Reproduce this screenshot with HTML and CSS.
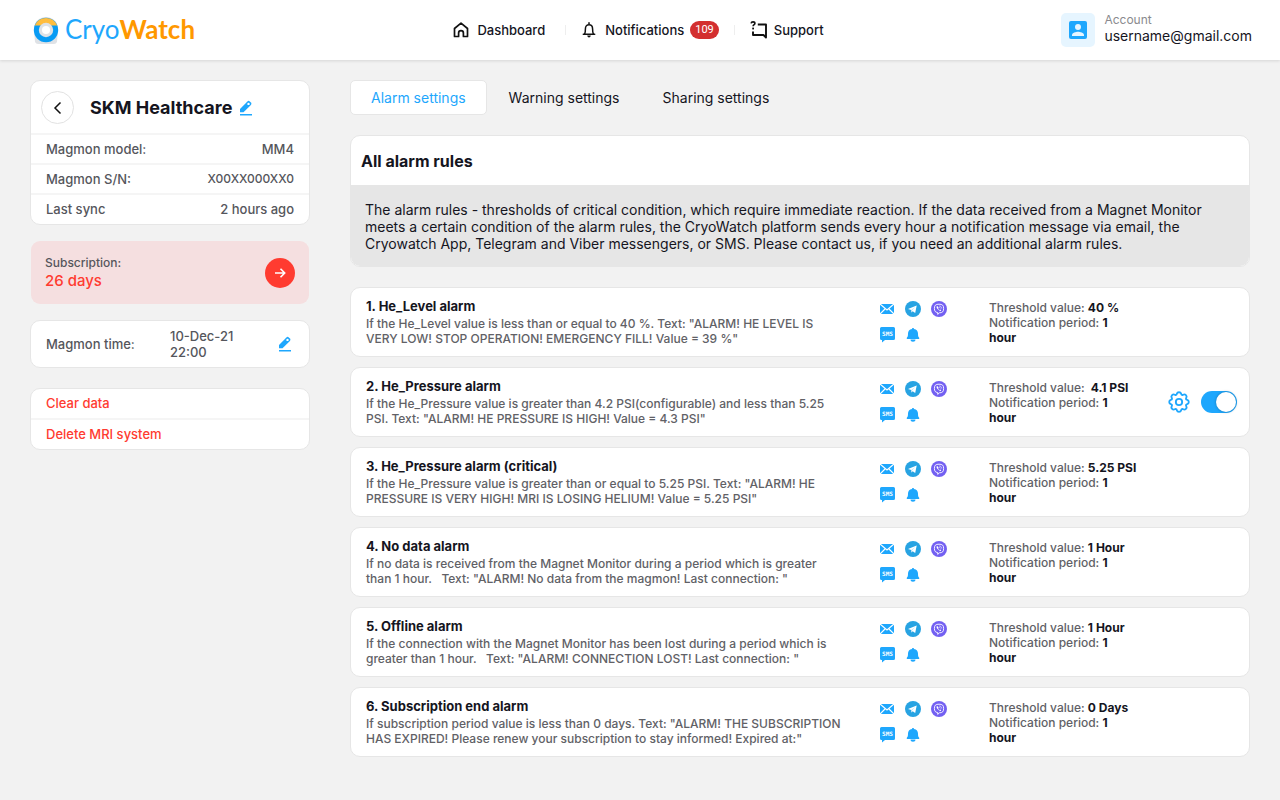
FILE: index.html
```html
<!DOCTYPE html>
<html lang="en">
<head>
<meta charset="utf-8">
<meta name="viewport" content="width=device-width, initial-scale=1">
<title>CryoWatch</title>
<link rel="stylesheet" href="styles.css">
</head>
<body>
<svg class="sprite" aria-hidden="true">
  <symbol id="mail" viewBox="0 0 16 16">
    <rect x="1" y="3" width="14" height="10" fill="#1ea7fd"/>
    <path d="M1 3l7 6 7-6M1 13l5-5M15 13l-5-5" fill="none" stroke="#fff" stroke-width="1.1"/>
  </symbol>
  <symbol id="telegram" viewBox="0 0 16 16">
    <circle cx="8" cy="8" r="8" fill="#27a3e2"/>
    <path d="M3 7.9l8.7-3.5-1.5 7.6-2.5-1.8-1.3 1.2-.2-2.3z" fill="#fff"/>
    <path d="M6.2 9.1l4-3.1-3.2 3.6-.6 1.8z" fill="#b5dcf3"/>
  </symbol>
  <symbol id="viber" viewBox="0 0 16 16">
    <circle cx="8" cy="8" r="8" fill="#7360f2"/>
    <path d="M8 3.2c3.4 0 4.6 1 4.6 4.3s-1.200 4.300-4.200 4.300L6.700 13.400v-1.800C4.300 11.200 3.400 10.100 3.400 7.500 3.400 4.200 4.600 3.200 8 3.200z" fill="none" stroke="#fff" stroke-width=".9"/>
    <path d="M5.900 5.300c-.7.5-.3 1.600.7 2.800s2.300 2.100 3 1.900c.8-.5.7-.9-.3-1.500l-.7.500c-.7-.3-1.200-.9-1.400-1.600l.4-.7c-.5-1-.9-1.700-1.700-1.400z" fill="#fff"/>
    <path d="M8.200 5c1.500 0 2.400.8 2.500 2.500M8.300 6.300c.7 0 1 .4 1.100 1.100" fill="none" stroke="#fff" stroke-width=".6"/>
  </symbol>
  <symbol id="sms" viewBox="0 0 16 16">
    <path d="M2.500 0h12A1.500 1.500 0 0 1 16 1.500v10a1.500 1.500 0 0 1-1.500 1.500H6l-3 2.500V13h-.5A1.500 1.500 0 0 1 1 11.500v-10A1.500 1.500 0 0 1 2.500 0z" fill="#1ea7fd"/>
    <text x="8.500" y="9" text-anchor="middle" class="sms-text">SMS</text>
  </symbol>
  <symbol id="bell-solid" viewBox="0 0 16 16">
    <path d="M8 1c.6 0 1 .4 1 1 2.700.5 4 2.200 4 4.600 0 2.400.2 3.400 1.200 4.200v1.200H1.800v-1.200c1-.8 1.200-1.800 1.200-4.200C3 4.200 4.300 2.500 7 2c0-.6.4-1 1-1zM5.500 12.600h5c0 1.400-1 2.200-2.500 2.200s-2.500-.8-2.500-2.200z" fill="#1ea7fd"/>
  </symbol>
  <symbol id="pencil" viewBox="0 0 16 16">
    <path d="M2 12.200V8.900L9.400 1.400a1.700 1.700 0 0 1 2.400 0l1.100 1.100a1.700 1.700 0 0 1 0 2.400L5.500 12.200z" fill="#1ea7fd"/>
    <circle cx="10.500" cy="3.900" r="1.200" fill="#fff"/>
    <rect x="2" y="14" width="12" height="1.500" fill="#1ea7fd"/>
  </symbol>
</svg>

<header class="topbar">
  <a class="logo" href="#" aria-label="CryoWatch">
    <svg class="logo-mark" viewBox="0 0 28 28" aria-hidden="true">
      <path d="M3 26l-1-12C2 6 7 1 14 1s12 5 12 13l-1 12q-1 2-3 2H6q-2 0-3-2z" fill="#dfe2e6"/>
      <circle cx="14" cy="14" r="12.200" fill="#089bf4"/>
      <path d="M2.700 9.500a12.200 12.200 0 0 1 22.600 0z" fill="#ffbd3e"/>
      <circle cx="14" cy="14" r="7.200" fill="#dfe2e6"/>
      <circle cx="14" cy="14" r="4" fill="#fff"/>
    </svg>
    <span class="logo-text">Cryo<b>Watch</b></span>
  </a>
  <nav class="menu">
    <a href="#" class="menu-item">
      <svg class="menu-icon" viewBox="0 0 16 16" aria-hidden="true"><path d="M1.500 6.500L8 1.200l6.500 5.300v8H10.400V11a2.400 2.400 0 0 0-4.800 0v3.500H1.500z" fill="none" stroke="#111" stroke-width="1.700" stroke-linejoin="round"/></svg>
      Dashboard
    </a>
    <a href="#" class="menu-item">
      <svg class="menu-icon" viewBox="0 0 16 16" aria-hidden="true"><path d="M2.300 12.300h11.400M3.600 12c.7-1 .8-2.500.8-5C4.400 4.300 5.600 2.800 8 2.800s3.600 1.500 3.600 4.200c0 2.500.1 4 .8 5M8 .8v2" fill="none" stroke="#111" stroke-width="1.500" stroke-linecap="round"/><path d="M6.200 13.500h3.600q-.3 2-1.800 2t-1.800-2z" fill="#111"/></svg>
      Notifications <span class="badge">109</span>
    </a>
    <a href="#" class="menu-item">
      <svg class="menu-icon support" viewBox="0 0 18 18" aria-hidden="true"><path d="M7.800 3.500H16v13L13.500 14H3v-3.500" fill="none" stroke="#111" stroke-width="1.900" stroke-linejoin="round"/><path d="M1.100 2.400C1.300 1.300 2 .9 3 .9c1.200 0 1.900.7 1.900 1.600C4.900 3.600 3.100 3.700 3.100 5.200" fill="none" stroke="#111" stroke-width="1.600"/><rect x="2.200" y="6.600" width="1.800" height="1.800" fill="#111"/></svg>
      Support
    </a>
  </nav>
  <a href="#" class="account">
    <span class="avatar">
      <svg viewBox="0 0 18 18" aria-hidden="true"><rect width="18" height="18" rx="2" fill="#1ea7fd"/><circle cx="9" cy="6" r="3" fill="#e6f5ff"/><path d="M3 15v-1c0-2 4-3.200 6-3.200s6 1.200 6 3.200v1z" fill="#e6f5ff"/></svg>
    </span>
    <span class="account-text"><span class="account-label">Account</span><span class="account-mail">username@gmail.com</span></span>
  </a>
</header>

<div class="page">
  <aside class="sidebar">
    <section class="card device">
      <div class="device-head">
        <button class="back" aria-label="Back"><svg viewBox="0 0 16 16" aria-hidden="true"><path d="M10.500 2.500L5 8l5.500 5.500" fill="none" stroke="#111" stroke-width="1.500"/></svg></button>
        <h1>SKM Healthcare</h1>
        <button class="edit" aria-label="Edit name"><svg><use href="#pencil"/></svg></button>
      </div>
      <dl class="facts">
        <div><dt>Magmon model:</dt><dd>MM4</dd></div>
        <div><dt>Magmon S/N:</dt><dd class="serial">X00XX000XX0</dd></div>
        <div><dt>Last sync</dt><dd>2 hours ago</dd></div>
      </dl>
    </section>
    <section class="subscription">
      <p><span class="sub-label">Subscription:</span><span class="sub-days">26 days</span></p>
      <button class="renew" aria-label="Renew subscription"><svg viewBox="0 0 16 16" aria-hidden="true"><path d="M3 8h9.500M8.500 3.800L12.700 8l-4.200 4.200" fill="none" stroke="#fff" stroke-width="1.600"/></svg></button>
    </section>
    <section class="card time">
      <span>Magmon time:</span>
      <time datetime="2021-12-10T22:00">10-Dec-21<br>22:00</time>
      <button class="edit" aria-label="Edit time"><svg><use href="#pencil"/></svg></button>
    </section>
    <section class="card danger">
      <button>Clear data</button>
      <button>Delete MRI system</button>
    </section>
  </aside>

  <main class="content">
    <nav class="tabs">
      <a href="#" class="tab active" aria-current="page">Alarm settings</a>
      <a href="#" class="tab">Warning settings</a>
      <a href="#" class="tab">Sharing settings</a>
    </nav>
    <section class="intro">
      <h2>All alarm rules</h2>
      <p>The alarm rules - thresholds of critical condition, which require immediate reaction. If the data received from a Magnet Monitor meets a certain condition of the alarm rules, the CryoWatch platform sends every hour a notification message via email, the Cryowatch App, Telegram and Viber messengers, or SMS. Please contact us, if you need an additional alarm rules.</p>
    </section>
    <div class="rules">
      <article class="rule">
        <div class="rule-text"><h3>1. He_Level alarm</h3><p>If the He_Level value is less than or equal to 40 %. Text: "ALARM! HE LEVEL IS VERY LOW! STOP OPERATION! EMERGENCY FILL! Value = 39 %"</p></div>
        <div class="channels"><svg><use href="#mail"/></svg><svg><use href="#telegram"/></svg><svg><use href="#viber"/></svg><svg><use href="#sms"/></svg><svg><use href="#bell-solid"/></svg></div>
        <div class="limits"><p class="threshold">Threshold value: <b>40 %</b></p><p>Notification period: <b>1</b> <b>hour</b></p></div>
      </article>
      <article class="rule">
        <div class="rule-text"><h3>2. He_Pressure alarm</h3><p>If the He_Pressure value is greater than 4.2 PSI(configurable) and less than 5.25 PSI. Text: "ALARM! HE PRESSURE IS HIGH! Value = 4.3 PSI"</p></div>
        <div class="channels"><svg><use href="#mail"/></svg><svg><use href="#telegram"/></svg><svg><use href="#viber"/></svg><svg><use href="#sms"/></svg><svg><use href="#bell-solid"/></svg></div>
        <div class="limits"><p class="threshold">Threshold value: <b>&nbsp;4.1 PSI</b></p><p>Notification period: <b>1</b> <b>hour</b></p></div>
        <div class="controls">
          <button class="gear" aria-label="Configure rule"><svg viewBox="-1 -1 18 18" aria-hidden="true" fill="none" stroke="#1ea7fd" stroke-width="1.500"><circle cx="8" cy="8" r="2.600"/><path d="M9.796 1.343c-.527-1.790-3.065-1.790-3.592 0l-.094.319a.873.873 0 0 1-1.255.52l-.292-.16c-1.640-.892-3.433.902-2.540 2.541l.159.292a.873.873 0 0 1-.52 1.255l-.319.094c-1.790.527-1.790 3.065 0 3.592l.319.094a.873.873 0 0 1 .52 1.255l-.16.292c-.892 1.640.901 3.434 2.541 2.540l.292-.159a.873.873 0 0 1 1.255.52l.094.319c.527 1.790 3.065 1.790 3.592 0l.094-.319a.873.873 0 0 1 1.255-.52l.292.16c1.640.893 3.434-.902 2.540-2.541l-.159-.292a.873.873 0 0 1 .52-1.255l.319-.094c1.790-.527 1.790-3.065 0-3.592l-.319-.094a.873.873 0 0 1-.52-1.255l.16-.292c.893-1.640-.902-3.433-2.541-2.540l-.292.159a.873.873 0 0 1-1.255-.52z"/></svg></button>
          <input type="checkbox" class="switch" aria-label="Rule enabled" checked>
        </div>
      </article>
      <article class="rule">
        <div class="rule-text"><h3>3. He_Pressure alarm (critical)</h3><p>If the He_Pressure value is greater than or equal to 5.25 PSI. Text: "ALARM! HE PRESSURE IS VERY HIGH! MRI IS LOSING HELIUM! Value = 5.25 PSI"</p></div>
        <div class="channels"><svg><use href="#mail"/></svg><svg><use href="#telegram"/></svg><svg><use href="#viber"/></svg><svg><use href="#sms"/></svg><svg><use href="#bell-solid"/></svg></div>
        <div class="limits"><p class="threshold">Threshold value: <b>5.25 PSI</b></p><p>Notification period: <b>1</b> <b>hour</b></p></div>
      </article>
      <article class="rule">
        <div class="rule-text"><h3>4. No data alarm</h3><p>If no data is received from the Magnet Monitor during a period which is greater than 1 hour. &nbsp; Text: "ALARM! No data from the magmon! Last connection: "</p></div>
        <div class="channels"><svg><use href="#mail"/></svg><svg><use href="#telegram"/></svg><svg><use href="#viber"/></svg><svg><use href="#sms"/></svg><svg><use href="#bell-solid"/></svg></div>
        <div class="limits"><p class="threshold">Threshold value: <b>1 Hour</b></p><p>Notification period: <b>1</b> <b>hour</b></p></div>
      </article>
      <article class="rule">
        <div class="rule-text"><h3>5. Offline alarm</h3><p>If the connection with the Magnet Monitor has been lost during a period which is greater than 1 hour. &nbsp; Text: "ALARM! CONNECTION LOST! Last connection: "</p></div>
        <div class="channels"><svg><use href="#mail"/></svg><svg><use href="#telegram"/></svg><svg><use href="#viber"/></svg><svg><use href="#sms"/></svg><svg><use href="#bell-solid"/></svg></div>
        <div class="limits"><p class="threshold">Threshold value: <b>1 Hour</b></p><p>Notification period: <b>1</b> <b>hour</b></p></div>
      </article>
      <article class="rule">
        <div class="rule-text"><h3>6. Subscription end alarm</h3><p>If subscription period value is less than 0 days. Text: "ALARM! THE SUBSCRIPTION HAS EXPIRED! Please renew your subscription to stay informed! Expired at:"</p></div>
        <div class="channels"><svg><use href="#mail"/></svg><svg><use href="#telegram"/></svg><svg><use href="#viber"/></svg><svg><use href="#sms"/></svg><svg><use href="#bell-solid"/></svg></div>
        <div class="limits"><p class="threshold">Threshold value: <b>0 Days</b></p><p>Notification period: <b>1</b> <b>hour</b></p></div>
      </article>
    </div>
  </main>
</div>
</body>
</html>
```
FILE: styles.css
```css
* { box-sizing: border-box; }
body {
  margin: 0;
  min-height: 100vh;
  background: #f2f2f2;
  color: #15151e;
  font-family: Inter, "Liberation Sans", sans-serif;
  font-size: 13px;
}
h1, h2, h3, p, dl, dd { margin: 0; }
a { color: inherit; text-decoration: none; }
button {
  padding: 0;
  border: 0;
  background: none;
  font: inherit;
  color: inherit;
  cursor: pointer;
}
svg { display: block; }
.sprite { display: none; }
.sms-text { font: bold 6px "DejaVu Sans Mono", monospace; fill: #fff; }

/* Top bar */
.topbar {
  display: grid;
  grid-template-columns: 1fr auto 1fr;
  align-items: center;
  height: 60px;
  padding: 0 28px 0 32px;
  background: #fff;
  box-shadow: 0 1px 3px rgba(0, 0, 0, .12);
}
.logo { display: flex; align-items: center; gap: 5px; justify-self: start; }
.logo-mark { width: 28px; height: 28px; }
.logo-text { padding-bottom: 2px; font: 26px/32px Lato, sans-serif; color: #1ea7fd; }
.logo-text b { font-weight: 700; color: #ff9800; }
.menu { display: flex; padding-right: 8px; }
.menu-item {
  display: flex;
  align-items: center;
  gap: 8px;
  padding: 0 15px 0 16px;
  font-weight: 500;
  line-height: 18px;
}
.menu-item:first-child { padding-right: 20px; }
.menu-item + .menu-item { position: relative; }
.menu-item + .menu-item::before {
  content: "";
  position: absolute;
  left: 0;
  top: 4px;
  width: 1px;
  height: 10px;
  background: #eee;
}
.menu-icon { width: 16px; height: 16px; }
.menu-icon.support { width: 18px; height: 18px; margin-right: -2px; }
.badge {
  margin-left: -2px;
  padding: 0 5px;
  border-radius: 9px;
  background: #d32f2f;
  color: #fff;
  font: 400 11px/18px Roboto, sans-serif;
}
.account { display: flex; align-items: center; gap: 9px; justify-self: end; }
.avatar {
  display: grid;
  place-items: center;
  width: 34px;
  height: 34px;
  border-radius: 5px;
  background: #e6f5ff;
}
.avatar svg { width: 18px; height: 18px; }
.account-text { display: grid; padding-bottom: 4px; }
.account-label { font-size: 12px; line-height: 15px; color: #8a8a8e; }
.account-mail { font-size: 14px; line-height: 17px; }

/* Page */
.page { display: flex; gap: 40px; padding: 20px 30px; }
.sidebar { flex: 0 0 280px; color: #55565c; font-weight: 500; }
.content { flex: 1; min-width: 0; }
.card { border: 1px solid #e6e6e6; border-radius: 10px; background: #fff; }

.device { padding-bottom: 1px; }
.device-head { display: flex; align-items: center; padding: 10px 10px 9px; }
.back {
  display: grid;
  place-items: center;
  width: 33px;
  height: 33px;
  border: 1px solid #e2e2e2;
  border-radius: 50%;
}
.back svg { width: 16px; height: 16px; }
.device-head h1 { margin: 0 6px 0 16px; font-size: 18px; line-height: 22px; font-weight: 700; color: #15151e; }
.edit svg { width: 16px; height: 16px; }
.facts > div {
  display: flex;
  justify-content: space-between;
  padding: 6px 15px;
  border-top: 2px solid #f5f5f5;
  line-height: 16px;
}
.facts .serial { font-size: 12px; }

.subscription {
  display: flex;
  align-items: center;
  justify-content: space-between;
  margin-top: 15px;
  padding: 14px;
  border: 1px solid transparent;
  border-radius: 10px;
  background: #f5dfe0;
  background-clip: padding-box;
}
.subscription p { display: grid; }
.sub-label { font-size: 12px; line-height: 16px; }
.sub-days { font-size: 15px; line-height: 19px; color: #ff3b30; }
.renew {
  display: grid;
  place-items: center;
  width: 30px;
  height: 30px;
  border-radius: 50%;
  background: #ff3b30;
}
.renew svg { width: 16px; height: 16px; }

.time {
  display: grid;
  grid-template-columns: 124px 1fr auto;
  align-items: center;
  margin-top: 15px;
  padding: 7px 16px 7px 15px;
  line-height: 16px;
}
.danger { margin-top: 20px; }
.danger button {
  display: block;
  width: 100%;
  padding: 6px 15px;
  line-height: 17px;
  text-align: left;
  font-weight: 500;
  color: #ff3b30;
}
.danger button + button { border-top: 2px solid #f5f5f5; }

/* Tabs */
.tabs { display: flex; gap: 1px; font-size: 14px; line-height: 17px; }
.tab { padding: 8px 20px; border: 1px solid transparent; border-radius: 5px; }
.tab.active { border-color: #e6e6e6; background: #fff; color: #1ea7fd; }

.intro { margin-top: 20px; border-radius: 10px; overflow: hidden; border: 1px solid #e6e6e6; background: #fff; }
.intro h2 { padding: 15px 10px 13px; font-size: 16px; line-height: 21px; font-weight: 700; }
.intro p { padding: 16px 14px 14px; background: #e6e6e6; font-size: 14px; line-height: 17px; }

/* Rules */
.rules { display: grid; gap: 10px; margin-top: 20px; }
.rule {
  display: grid;
  grid-template-columns: minmax(0, 1fr) 72px 141px 69px;
  column-gap: 38px;
  align-items: center;
  padding: 10px 12px 10px 15px;
  border: 1px solid #e6e6e6;
  border-radius: 10px;
  background: #fff;
  font-size: 12px;
  line-height: 15px;
  font-weight: 500;
  color: #616166;
}
.rule h3 { margin-bottom: 2px; font-size: 13px; line-height: 16px; font-weight: 700; color: #15151e; }
.rule b { font-weight: 700; color: #15151e; }
.threshold { white-space: nowrap; }
.channels { display: grid; grid-template-columns: repeat(3, 16px); gap: 10px; }
.channels svg { width: 16px; height: 16px; }
.controls { display: flex; align-items: center; justify-content: space-between; }
.gear svg { width: 22px; height: 22px; }
.switch {
  appearance: none;
  display: flex;
  align-items: center;
  width: 36px;
  height: 22px;
  margin: 0;
  padding: 1px;
  border-radius: 11px;
  background: #ccc;
}
.switch::before {
  content: "";
  width: 20px;
  height: 20px;
  border-radius: 50%;
  background: #fff;
  box-shadow: 0 0 3px rgba(0, 0, 0, .3);
}
.switch:checked { justify-content: flex-end; background: #1ea7fd; }
```
